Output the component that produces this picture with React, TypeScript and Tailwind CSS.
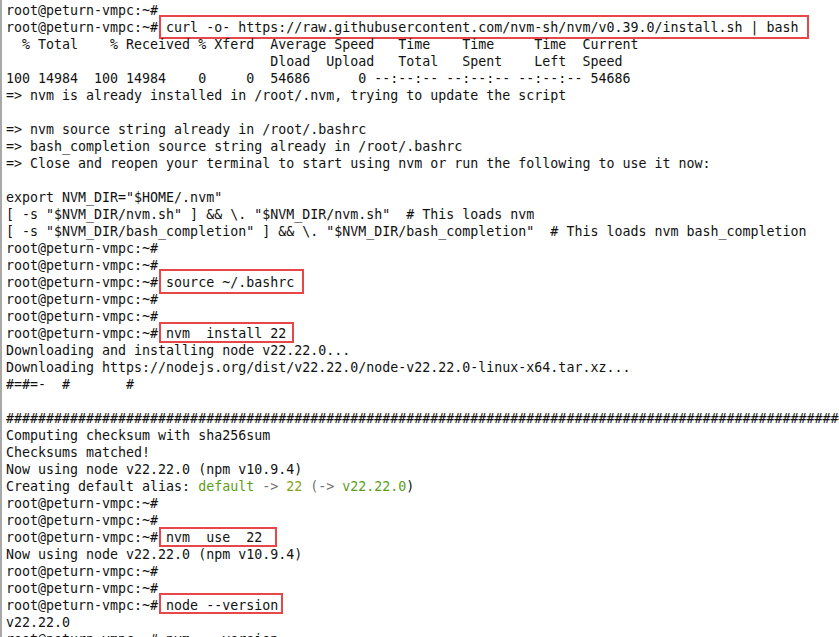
import React from 'react';

const PROMPT = 'root@peturn-vmpc:~#';

const Line = ({ children }: { children?: React.ReactNode }) => (
  <div className="relative h-[17px] whitespace-pre leading-[17px]">{children || ' '}</div>
);

const Boxed = ({ cmd, box }: { cmd: string; box: string }) => (
  <Line>
    {PROMPT + ' ' + cmd}
    <span className={'absolute left-[153px] border-2 border-[#e8474a] ' + box} />
  </Line>
);

const App = () => {
  return (
    <div className="h-[637px] w-full overflow-hidden border-l-2 border-[#a8a8a8] bg-white pl-[4px] pt-[2px] font-['DejaVu_Sans_Mono',monospace] text-[13.3px] text-[#111]">
      <Line>{PROMPT}</Line>
      <Boxed
        cmd="curl -o- https://raw.githubusercontent.com/nvm-sh/nvm/v0.39.0/install.sh | bash"
        box="top-[-4px] h-[24px] w-[650px]"
      />
      <Line>{'  % Total    % Received % Xferd  Average Speed   Time    Time     Time  Current'}</Line>
      <Line>{'                                 Dload  Upload   Total   Spent    Left  Speed'}</Line>
      <Line>{'100 14984  100 14984    0     0  54686      0 --:--:-- --:--:-- --:--:-- 54686'}</Line>
      <Line>{'=> nvm is already installed in /root/.nvm, trying to update the script'}</Line>
      <Line />
      <Line>{'=> nvm source string already in /root/.bashrc'}</Line>
      <Line>{'=> bash_completion source string already in /root/.bashrc'}</Line>
      <Line>{'=> Close and reopen your terminal to start using nvm or run the following to use it now:'}</Line>
      <Line />
      <Line>{'export NVM_DIR="$HOME/.nvm"'}</Line>
      <Line>{'[ -s "$NVM_DIR/nvm.sh" ] && \\. "$NVM_DIR/nvm.sh"  # This loads nvm'}</Line>
      <Line>{'[ -s "$NVM_DIR/bash_completion" ] && \\. "$NVM_DIR/bash_completion"  # This loads nvm bash_completion'}</Line>
      <Line>{PROMPT}</Line>
      <Line>{PROMPT}</Line>
      <Boxed cmd="source ~/.bashrc" box="top-[-5px] h-[25px] w-[145px]" />
      <Line>{PROMPT}</Line>
      <Line>{PROMPT}</Line>
      <Boxed cmd="nvm  install 22" box="top-[-3px] h-[21px] w-[135px]" />
      <Line>{'Downloading and installing node v22.22.0...'}</Line>
      <Line>{'Downloading https://nodejs.org/dist/v22.22.0/node-v22.22.0-linux-x64.tar.xz...'}</Line>
      <Line>{'#=#=-  #       #'}</Line>
      <Line />
      <Line>{'#'.repeat(110)}</Line>
      <Line>{'Computing checksum with sha256sum'}</Line>
      <Line>{'Checksums matched!'}</Line>
      <Line>{'Now using node v22.22.0 (npm v10.9.4)'}</Line>
      <Line>
        {'Creating default alias: '}
        <span className="text-[#5a9e1a]">default</span>
        <span className="text-[#6e6e6e]">{' -> '}</span>
        <span className="text-[#82a41e]">22</span>
        <span className="text-[#6e6e6e]">{' (-> '}</span>
        <span className="text-[#5a9e1a]">v22.22.0</span>
        {')'}
      </Line>
      <Line>{PROMPT}</Line>
      <Line>{PROMPT}</Line>
      <Boxed cmd="nvm  use  22" box="top-[-2px] h-[20px] w-[118px]" />
      <Line>{'Now using node v22.22.0 (npm v10.9.4)'}</Line>
      <Line>{PROMPT}</Line>
      <Line>{PROMPT}</Line>
      <Boxed cmd="node --version" box="top-[-4px] h-[21px] w-[124px]" />
      <Line>{'v22.22.0'}</Line>
      <Line>{PROMPT + ' nvm  --version'}</Line>
    </div>
  );
};

export default App;
